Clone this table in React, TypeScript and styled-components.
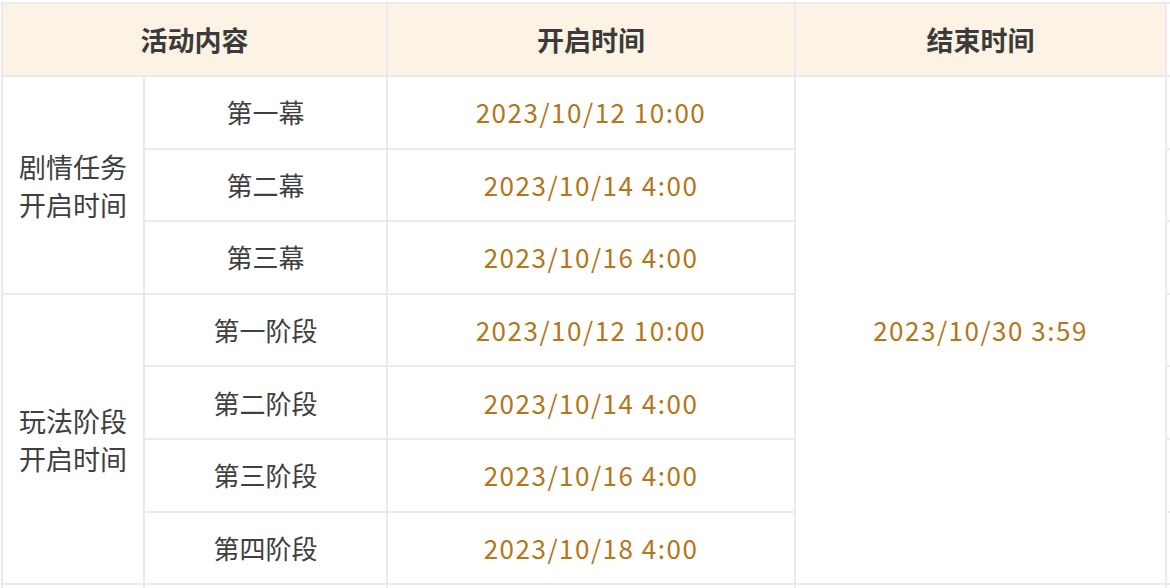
import styled, { createGlobalStyle } from "styled-components";

type Stage = { name: string; start: string };
type Group = { label: string[]; stages: Stage[] };

const groups: Group[] = [
  {
    label: ["剧情任务", "开启时间"],
    stages: [
      { name: "第一幕", start: "2023/10/12 10:00" },
      { name: "第二幕", start: "2023/10/14 4:00" },
      { name: "第三幕", start: "2023/10/16 4:00" },
    ],
  },
  {
    label: ["玩法阶段", "开启时间"],
    stages: [
      { name: "第一阶段", start: "2023/10/12 10:00" },
      { name: "第二阶段", start: "2023/10/14 4:00" },
      { name: "第三阶段", start: "2023/10/16 4:00" },
      { name: "第四阶段", start: "2023/10/18 4:00" },
    ],
  },
];

const endTime = "2023/10/30 3:59";
const totalRows = groups.reduce((n, g) => n + g.stages.length, 0);

const GlobalStyle = createGlobalStyle`
  html, body {
    margin: 0;
    overflow: hidden;
    background: #ffffff;
  }
  body {
    font-family: "Noto Sans CJK SC", "Noto Sans", sans-serif;
  }
`;

const Page = styled.div`
  padding: 2px 0 0 1px;
  width: 1400px;
`;

const Table = styled.table`
  border-collapse: collapse;
  table-layout: fixed;
  width: 1290px;
`;

const HeadCell = styled.th<{ $blank?: boolean }>`
  height: 71px;
  padding: 0;
  border: 2px solid #e9e9ef;
  background: ${(p) => (p.$blank ? "#ffffff" : "#fdf3e4")};
  color: #3b3b3b;
  font-size: 27px;
  font-weight: 700;
  text-align: center;
  vertical-align: middle;
`;

const Cell = styled.td<{ $tone?: "label" | "date" | "group" }>`
  height: 70.6px;
  padding: 0;
  border: 2px solid #e9e9ef;
  color: ${(p) => (p.$tone === "date" ? "#b3761a" : "#404040")};
  font-size: ${(p) => (p.$tone === "group" ? "27px" : "26px")};
  letter-spacing: ${(p) => (p.$tone === "date" ? "1.5px" : "0")};
  line-height: 38px;
  text-align: center;
  vertical-align: middle;
  white-space: nowrap;
`;

const GroupLine = styled.div`
  padding-top: 3px;
`;

export default function App() {
  return (
    <>
      <GlobalStyle />
      <Page>
        <Table>
          <colgroup>
            <col style={{ width: 142 }} />
            <col style={{ width: 243 }} />
            <col style={{ width: 408 }} />
            <col style={{ width: 371 }} />
            <col />
          </colgroup>
          <thead>
            <tr>
              <HeadCell colSpan={2}>活动内容</HeadCell>
              <HeadCell>开启时间</HeadCell>
              <HeadCell>结束时间</HeadCell>
              <HeadCell $blank />
            </tr>
          </thead>
          <tbody>
            {groups.map((group, gi) =>
              group.stages.map((stage, si) => (
                <tr key={stage.name}>
                  {si === 0 && (
                    <Cell $tone="group" rowSpan={group.stages.length}>
                      <GroupLine>
                        {group.label.map((line) => (
                          <div key={line}>{line}</div>
                        ))}
                      </GroupLine>
                    </Cell>
                  )}
                  <Cell>{stage.name}</Cell>
                  <Cell $tone="date">{stage.start}</Cell>
                  {gi === 0 && si === 0 && (
                    <Cell $tone="date" rowSpan={totalRows}>
                      {endTime}
                    </Cell>
                  )}
                  <Cell />
                </tr>
              ))
            )}
            <tr>
              <Cell />
              <Cell />
              <Cell />
              <Cell />
              <Cell />
            </tr>
          </tbody>
        </Table>
      </Page>
    </>
  );
}
